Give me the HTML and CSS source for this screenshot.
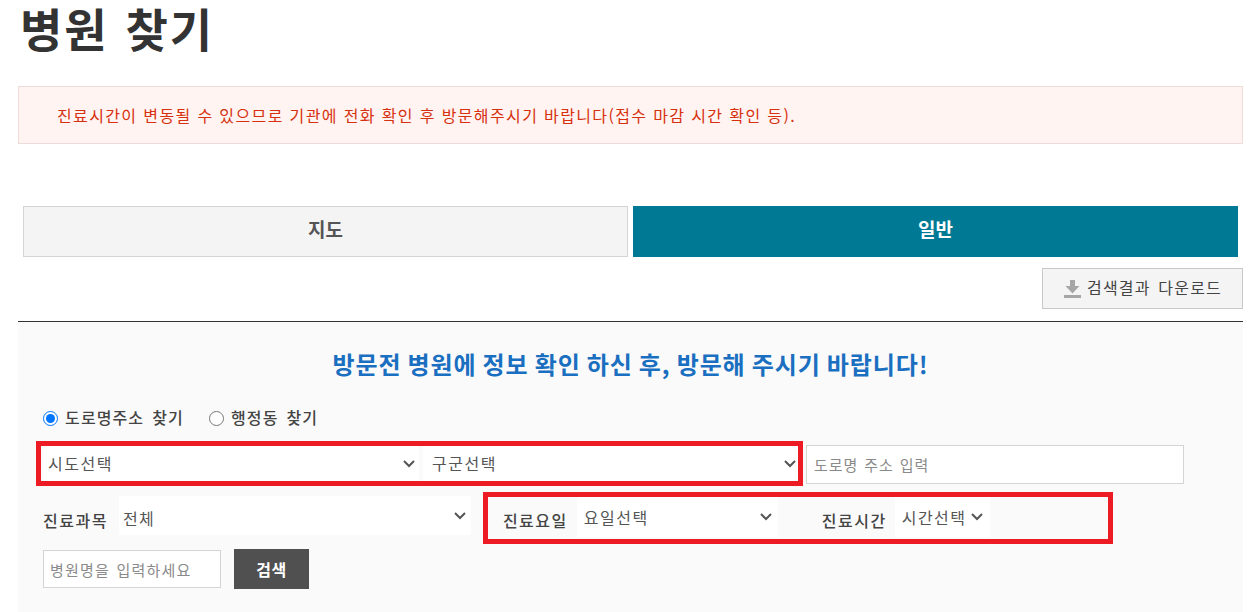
FILE: index.html
```html
<!DOCTYPE html>
<html lang="ko">
<head>
    <meta charset="UTF-8">
    <meta name="viewport" content="width=device-width, initial-scale=1.0">
    <title>병원 찾기</title>
    <link rel="stylesheet" href="styles.css">
</head>
<body>
    <h1 class="page-title">병원 찾기</h1>
    <p class="notice">진료시간이 변동될 수 있으므로 기관에 전화 확인 후 방문해주시기 바랍니다(접수 마감 시간 확인 등).</p>
    <div class="tabs">
        <a class="tab">지도</a>
        <a class="tab active">일반</a>
    </div>
    <div class="download-row">
        <button class="download-btn" type="button">
            <svg class="btn-icon" width="17" height="18" viewBox="0 0 17 18"><path d="M6 0h5v6h4.500l-7 7.500-7-7.500H6z" fill="#a6a6a6"/><rect y="15" width="17" height="3" fill="#a6a6a6"/></svg>
            <span class="btn-text">검색결과 다운로드</span>
        </button>
    </div>
    <section class="search-panel">
        <h2 class="panel-title">방문전 병원에 정보 확인 하신 후, 방문해 주시기 바랍니다!</h2>
        <div class="radio-row">
            <label><input type="radio" name="addr" checked> 도로명주소 찾기</label>
            <label><input type="radio" name="addr"> 행정동 찾기</label>
        </div>
        <div class="address-row">
            <div class="mark-box address-box">
                <select class="sel sel-sido"><option>시도선택</option></select>
                <select class="sel sel-gugun"><option>구군선택</option></select>
            </div>
            <input class="road-input" type="text" placeholder="도로명 주소 입력">
        </div>
        <div class="filter-row">
            <span class="field-label">진료과목</span>
            <select class="sel sel-dept"><option>전체</option></select>
            <div class="mark-box time-box">
                <span class="field-label">진료요일</span>
                <select class="sel sel-day"><option>요일선택</option></select>
                <span class="field-label label-time">진료시간</span>
                <select class="sel sel-time"><option>시간선택</option></select>
            </div>
        </div>
        <div class="name-row">
            <input class="name-input" type="text" placeholder="병원명을 입력하세요">
            <button class="search-btn" type="button">검색</button>
        </div>
    </section>
</body>
</html>
```

FILE: styles.css
```css
body {
    font-family: "Noto Sans CJK KR", "Noto Sans", sans-serif;
    background-color: #fff;
    color: #333;
    margin: 0;
    padding: 0 17px 0 18px;
    height: 612px;
    overflow: hidden;
}
.page-title {
    font-size: 46px;
    line-height: 54px;
    font-weight: 700;
    letter-spacing: 2px;
    word-spacing: 2px;
    margin: 0 0 32px 2px;
    color: #333;
}
.notice {
    margin: 0;
    height: 58px;
    box-sizing: border-box;
    padding-left: 38px;
    line-height: 56px;
    font-size: 16px;
    letter-spacing: 1.370px;
    color: #d7300f;
    background-color: #fff4f1;
    border: 1px solid #eedcd8;
}
.tabs {
    display: flex;
    gap: 5px;
    margin: 62px 5px 0 5px;
}
.tab {
    flex: 1;
    height: 51px;
    box-sizing: border-box;
    line-height: 44px;
    text-align: center;
    font-size: 19px;
    font-weight: 700;
    color: #555;
    background-color: #f4f4f4;
    border: 1px solid #d4d4d4;
}
.tab.active {
    color: #fff;
    background-color: #007a94;
    border-color: #007a94;
}
.download-row {
    display: flex;
    justify-content: flex-end;
    margin-top: 11px;
    padding-bottom: 12px;
    border-bottom: 1px solid #333;
}
.download-btn {
    display: flex;
    align-items: center;
    gap: 6px;
    width: 201px;
    height: 41px;
    padding: 0 0 0 21px;
    font-family: inherit;
    font-size: 16px;
    letter-spacing: 1.200px;
    word-spacing: 2px;
    color: #444;
    background-color: #f4f4f4;
    border: 1px solid #c8c8c8;
}
.btn-icon {
    margin-top: 1px;
}
.btn-text {
    margin-top: -3px;
}
.search-panel {
    background-color: #fafafa;
    padding: 0 25px;
    height: 290px;
}
.panel-title {
    margin: 0;
    padding-top: 24px;
    line-height: 35px;
    text-align: center;
    font-size: 24px;
    font-weight: 700;
    letter-spacing: 0.900px;
    word-spacing: -1.500px;
    color: #1a6fc0;
}
.radio-row {
    display: flex;
    gap: 25px;
    margin-top: 24px;
    height: 24px;
    align-items: center;
    font-size: 16px;
    font-weight: 500;
    letter-spacing: 1.100px;
    word-spacing: 2.500px;
    color: #444;
}
.radio-row input {
    margin: 0 -1px 0 0;
    width: 15px;
    height: 15px;
    vertical-align: -2px;
}
.address-row {
    display: flex;
    align-items: center;
    margin: 12px 0 0 -7px;
    height: 45px;
}
.mark-box {
    display: flex;
    box-sizing: border-box;
    border: 5px solid #ed1c24;
}
.address-box {
    align-items: center;
    width: 767px;
    height: 45px;
    padding-left: 2px;
    gap: 4px;
}
.sel {
    appearance: none;
    height: 35px;
    box-sizing: border-box;
    border: 0;
    border-radius: 0;
    padding: 0 5px 1px;
    font-family: inherit;
    font-size: 16px;
    letter-spacing: 1.500px;
    color: #555;
    background-color: #fff;
    background-image: url("data:image/svg+xml,%3Csvg xmlns='http://www.w3.org/2000/svg' width='12' height='8'%3E%3Cpath d='M1 1l5 5 5-5' fill='none' stroke='%23555' stroke-width='2'/%3E%3C/svg%3E");
    background-repeat: no-repeat;
    background-position: right 3px center;
}
.sel-sido {
    width: 376px;
    background-position: right 4px center;
}
.sel-gugun {
    width: 375px;
    padding-left: 9px;
    background-position: right 2px center;
}
.road-input {
    margin: 2px 0 0 3px;
    width: 378px;
    height: 39px;
    box-sizing: border-box;
    padding: 0 7px;
    border: 1px solid #d4d4d4;
    font-family: inherit;
    font-size: 15px;
    letter-spacing: 0.900px;
    word-spacing: 1px;
}
.road-input::placeholder,
.name-input::placeholder {
    color: #8a8a8a;
}
.filter-row {
    display: flex;
    align-items: flex-start;
    margin-top: 6px;
}
.field-label {
    margin-top: 11px;
    font-size: 16px;
    font-weight: 500;
    letter-spacing: 1.500px;
    color: #444;
    white-space: nowrap;
}
.filter-row > .field-label {
    margin-top: 16px;
}
.sel-dept {
    margin: 4px 0 0 11px;
    width: 352px;
    height: 39px;
    padding: 4px 4px 0;
    background-position: right 5px center;
}
.time-box {
    margin-left: 12px;
    width: 630px;
    height: 52px;
    padding-left: 15px;
}
.sel-day {
    width: 201px;
    height: 40px;
    margin-left: 9px;
    padding-left: 7px;
    background-position: right 6px center;
}
.label-time {
    margin-left: 44px;
}
.sel-time {
    width: 95px;
    height: 40px;
    margin-left: 8px;
    padding-left: 7px;
    background-position: right 7px center;
}
.name-row {
    display: flex;
    align-items: center;
    gap: 13px;
    margin-top: 5px;
}
.name-input {
    width: 178px;
    height: 38px;
    box-sizing: border-box;
    padding: 0 6px;
    border: 1px solid #d4d4d4;
    font-family: inherit;
    font-size: 15px;
    letter-spacing: 1.200px;
    word-spacing: 1px;
}
.search-btn {
    width: 75px;
    height: 40px;
    border: 0;
    font-family: inherit;
    font-size: 16px;
    font-weight: 700;
    letter-spacing: 0.500px;
    color: #fff;
    background-color: #505050;
}
```
